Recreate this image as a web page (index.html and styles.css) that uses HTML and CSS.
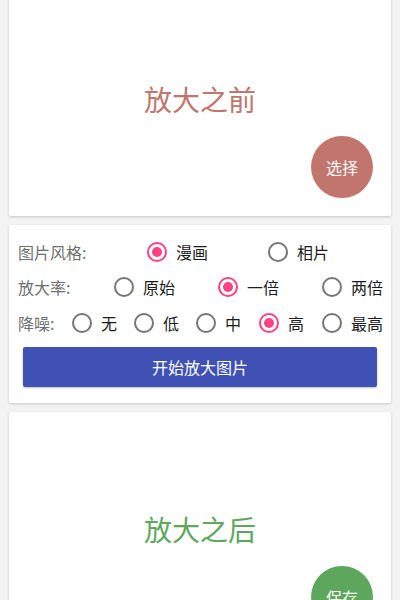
FILE: index.html
```html
<!DOCTYPE html>
<html lang="zh-CN">
<head>
  <meta charset="UTF-8" />
  <meta name="viewport" content="width=device-width, initial-scale=1.0"/>
  <title>图片放大</title>
  <link rel="stylesheet" href="styles.css">
</head>
<body>

  <main class="page">

    <section class="card preview">
      <div class="preview-title before">放大之前</div>
      <button class="fab fab-before" type="button">选择</button>
    </section>

    <section class="card options">
      <div class="opt-row row-style">
        <span class="opt-label">图片风格:</span>
        <label class="radio"><span class="dot checked"></span>漫画</label>
        <label class="radio"><span class="dot"></span>相片</label>
      </div>
      <div class="opt-row row-scale">
        <span class="opt-label">放大率:</span>
        <label class="radio"><span class="dot"></span>原始</label>
        <label class="radio"><span class="dot checked"></span>一倍</label>
        <label class="radio"><span class="dot"></span>两倍</label>
      </div>
      <div class="opt-row row-noise">
        <span class="opt-label">降噪:</span>
        <label class="radio"><span class="dot"></span>无</label>
        <label class="radio"><span class="dot"></span>低</label>
        <label class="radio"><span class="dot"></span>中</label>
        <label class="radio"><span class="dot checked"></span>高</label>
        <label class="radio"><span class="dot"></span>最高</label>
      </div>
      <button class="start-btn" type="button">开始放大图片</button>
    </section>

    <section class="card preview">
      <div class="preview-title after">放大之后</div>
      <button class="fab fab-after" type="button">保存</button>
    </section>

  </main>

</body>
</html>
```

FILE: styles.css
```css
body {
  font-family: "Noto Sans CJK SC", "Noto Sans", sans-serif;
  background: #f3f3f3;
  margin: 0;
  padding: 0;
  overflow: hidden;
}
.page {
  display: flex;
  flex-direction: column;
  gap: 9px;
  padding: 0 9px;
}
.card {
  background: white;
  border-radius: 2px;
  box-shadow: 0 1px 3px rgba(0,0,0,0.18);
}
.preview {
  position: relative;
  height: 234px;
  flex-shrink: 0;
  display: flex;
  align-items: center;
  justify-content: center;
}
.preview:first-child {
  margin-top: -18px;
}
.preview-title {
  font-size: 28px;
  line-height: 1;
}
.before { color: #c0756e; }
.after { color: #5ea75d; }
.fab {
  position: absolute;
  right: 18px;
  bottom: 18px;
  width: 62px;
  height: 62px;
  border-radius: 50%;
  border: none;
  color: white;
  font-family: inherit;
  font-size: 16px;
  padding: 0;
}
.fab-before { background: #c1756d; }
.fab-after { background: #5ca75b; }

.options {
  padding: 9px 9px 16px;
}
.opt-row {
  display: grid;
  align-items: center;
  height: 35.5px;
  font-size: 16px;
  line-height: 1;
}
.row-style { grid-template-columns: 129px 121px auto; }
.row-scale { grid-template-columns: 96px 104px 104px auto; }
.row-noise { grid-template-columns: 54px 62px 62px 63px 63px auto; }
.opt-label {
  color: #6f6f6f;
}
.radio {
  display: flex;
  align-items: center;
  gap: 9px;
  color: #1c1c1c;
  white-space: nowrap;
}
.dot {
  width: 20px;
  height: 20px;
  box-sizing: border-box;
  border: 2px solid #757575;
  border-radius: 50%;
  display: flex;
  align-items: center;
  justify-content: center;
}
.dot.checked {
  border-color: #ff4081;
}
.dot.checked::after {
  content: "";
  width: 10px;
  height: 10px;
  border-radius: 50%;
  background: #ff4081;
}
.start-btn {
  display: block;
  width: calc(100% - 10px);
  height: 40px;
  margin: 6px 5px 0;
  background: #3f51b5;
  color: white;
  border: none;
  border-radius: 2px;
  font-family: inherit;
  font-size: 16px;
  box-shadow: 0 1px 2px rgba(0,0,0,0.25);
}
```
